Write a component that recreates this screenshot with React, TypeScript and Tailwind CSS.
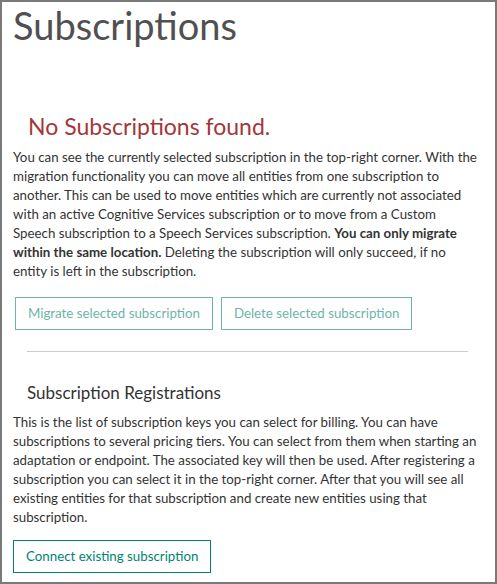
import React from "react";

const font = { fontFamily: '"Lato", "Noto Sans", sans-serif' };

const App: React.FC = () => {
  return (
    <div
      className="w-[497px] h-[584px] border-2 border-[#7a7a7a] bg-white text-[#333333] overflow-hidden"
      style={font}
    >
      <div className="px-[11px]">
        {/* PAGE TITLE */}
        <h1 className="text-[38px] leading-[46px] text-[#505050]">Subscriptions</h1>

        {/* EMPTY STATE */}
        <h2 className="mt-[63px] ml-[15px] text-[23px] leading-[30px] text-[#a4373a]">
          No Subscriptions found.
        </h2>
        <p className="mt-[7px] text-[13.3px] leading-[19px] whitespace-nowrap">
          You can see the currently selected subscription in the top-right corner. With the
          <br />
          migration functionality you can move all entities from one subscription to
          <br />
          another. This can be used to move entities which are currently not associated
          <br />
          with an active Cognitive Services subscription or to move from a Custom
          <br />
          Speech subscription to a Speech Services subscription.{" "}
          <b className="font-bold">
            You can only migrate
            <br />
            within the same location.
          </b>{" "}
          Deleting the subscription will only succeed, if no
          <br />
          entity is left in the subscription.
        </p>

        <div className="mt-[16px] ml-[2px] flex gap-[8px]">
          <button className="h-[33px] px-[12px] border border-[#6bb7a9] text-[#6bb5a8] text-[13.3px]">
            Migrate selected subscription
          </button>
          <button className="h-[33px] px-[12px] border border-[#6bb7a9] text-[#6bb5a8] text-[13.3px]">
            Delete selected subscription
          </button>
        </div>

        <hr className="mt-[21px] ml-[14px] mr-[16px] border-t border-[#cccccc]" />

        {/* REGISTRATIONS */}
        <h3 className="mt-[29px] ml-[14px] text-[17px] leading-[24px] text-[#333333]">
          Subscription Registrations
        </h3>
        <p className="mt-[8px] text-[13.3px] leading-[19px] whitespace-nowrap">
          This is the list of subscription keys you can select for billing. You can have
          <br />
          subscriptions to several pricing tiers. You can select from them when starting an
          <br />
          adaptation or endpoint. The associated key will then be used. After registering a
          <br />
          subscription you can select it in the top-right corner. After that you will see all
          <br />
          existing entities for that subscription and create new entities using that
          <br />
          subscription.
        </p>

        <button className="mt-[13px] h-[33px] px-[12px] border border-[#008272] text-[#008272] text-[13.3px]">
          Connect existing subscription
        </button>
      </div>
    </div>
  );
};

export default App;
